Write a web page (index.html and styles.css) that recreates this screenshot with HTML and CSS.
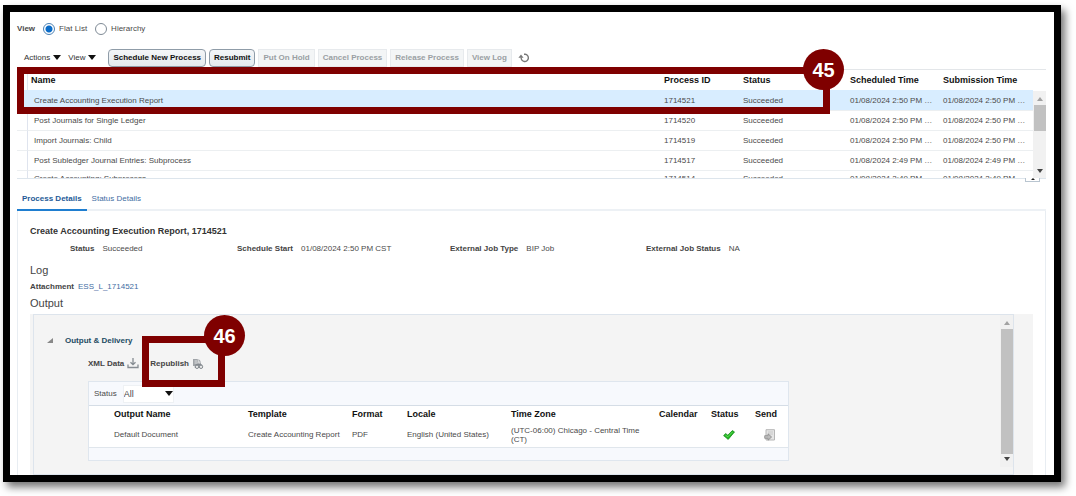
FILE: index.html
```html
<!DOCTYPE html>
<html lang="en">
<head>
<meta charset="utf-8">
<title>Scheduled Processes</title>
<link rel="stylesheet" href="styles.css">
</head>
<body>
<main class="frame">
  <fieldset class="view-mode">
    <legend class="view-legend">View</legend>
    <label class="radio"><input type="radio" name="view" checked>Flat List</label>
    <label class="radio"><input type="radio" name="view">Hierarchy</label>
  </fieldset>

  <div class="toolbar">
    <button class="menu-button menu-actions" type="button">Actions <span class="caret"></span></button>
    <button class="menu-button menu-view" type="button">View <span class="caret"></span></button>
    <button class="button" type="button">Schedule New Process</button>
    <button class="button" type="button">Resubmit</button>
    <button class="button" type="button" disabled>Put On Hold</button>
    <button class="button" type="button" disabled>Cancel Process</button>
    <button class="button" type="button" disabled>Release Process</button>
    <button class="button" type="button" disabled>View Log</button>
    <button class="icon-button" type="button" aria-label="Refresh">
      <svg width="12" height="10" viewBox="0 0 12 10"><path d="M6 1.300H7.200A3.600 3.600 0 1 1 3.200 4.400" fill="none" stroke="#777" stroke-width="1.400"/><path d="M.4 4.800 3 1.600 5.600 4.800Z" fill="#777"/></svg>
    </button>
  </div>

  <section class="process-area">
    <div class="process-list">
      <table class="processes">
        <colgroup><col class="c-gutter"><col><col class="c-id"><col class="c-status"><col class="c-time"><col class="c-sub"></colgroup>
        <thead>
          <tr><th></th><th class="name-head">Name</th><th>Process ID</th><th>Status</th><th>Scheduled Time</th><th>Submission Time</th></tr>
        </thead>
        <tbody>
          <tr class="selected"><td></td><td>Create Accounting Execution Report</td><td>1714521</td><td>Succeeded</td><td>01/08/2024 2:50 PM …</td><td>01/08/2024 2:50 PM …</td></tr>
          <tr><td></td><td>Post Journals for Single Ledger</td><td>1714520</td><td>Succeeded</td><td>01/08/2024 2:50 PM …</td><td>01/08/2024 2:50 PM …</td></tr>
          <tr><td></td><td>Import Journals: Child</td><td>1714519</td><td>Succeeded</td><td>01/08/2024 2:50 PM …</td><td>01/08/2024 2:50 PM …</td></tr>
          <tr><td></td><td>Post Subledger Journal Entries: Subprocess</td><td>1714517</td><td>Succeeded</td><td>01/08/2024 2:49 PM …</td><td>01/08/2024 2:49 PM …</td></tr>
          <tr><td></td><td>Create Accounting: Subprocess</td><td>1714514</td><td>Succeeded</td><td>01/08/2024 2:49 PM …</td><td>01/08/2024 2:49 PM …</td></tr>
        </tbody>
      </table>
      <div class="scrollbar list-scroll"><span class="arrow-up"></span><span class="thumb"></span><span class="arrow-down"></span></div>
    </div>
    <span class="splitter"><span class="splitter-arrow"></span></span>
    <div class="callout callout-row"><span class="callout-number">45</span></div>
  </section>

  <nav class="tabs">
    <a class="tab active" href="#process">Process Details</a>
    <a class="tab" href="#status">Status Details</a>
  </nav>

  <section class="panel" id="process">
    <h1 class="title">Create Accounting Execution Report, 1714521</h1>
    <dl class="fields">
      <div class="field"><dt>Status</dt><dd>Succeeded</dd></div>
      <div class="field"><dt>Schedule Start</dt><dd>01/08/2024 2:50 PM CST</dd></div>
      <div class="field"><dt>External Job Type</dt><dd>BIP Job</dd></div>
      <div class="field"><dt>External Job Status</dt><dd>NA</dd></div>
    </dl>
    <h2 class="subtitle">Log</h2>
    <p class="attachment"><b>Attachment</b><a href="#log">ESS_L_1714521</a></p>
    <h2 class="subtitle output-title">Output</h2>

    <div class="output-well">
      <div class="output">
        <div class="output-body">
          <h3 class="delivery"><span class="disclosure"></span>Output &amp; Delivery</h3>
          <div class="actions">
            <button class="action" type="button">XML Data
              <svg width="12" height="12" viewBox="0 0 12 12" fill="none" stroke="#868c92"><path d="M6 0V6.500M3.500 4.200 6 6.700 8.500 4.200" stroke-width="1.300"/><path d="M1 6.500V9.500H11V6.500" stroke-width="1.300"/></svg>
            </button>
            <button class="action" type="button">Republish
              <svg width="12" height="12" viewBox="0 0 12 12"><path d="M1 1H6.500L9 3.500V8H1Z" fill="#a0a4a8"/><path d="M6.200 1V4H9M2.500 3H5M2.500 5H8" fill="none" stroke="#f0f0f0" stroke-width=".8"/><path d="M3.500 6.500 6 5.500 10 6.500 11 9.500H2.500Z" fill="#858b90"/><circle cx="5" cy="8.800" r="1.700" fill="#e8e8e8" stroke="#858b90"/><circle cx="9" cy="8.800" r="1.700" fill="#e8e8e8" stroke="#858b90"/></svg>
            </button>
            <div class="callout callout-republish"><span class="callout-number">46</span></div>
          </div>
          <div class="documents">
            <div class="filter"><label for="status-filter">Status</label>
              <span class="select-wrap"><select id="status-filter"><option>All</option></select><span class="caret"></span></span>
            </div>
            <table class="docs">
              <colgroup><col class="d-pad"><col class="d-name"><col class="d-template"><col class="d-format"><col class="d-locale"><col class="d-zone"><col class="d-calendar"><col class="d-status"><col class="d-send"></colgroup>
              <thead><tr><th></th><th>Output Name</th><th>Template</th><th>Format</th><th>Locale</th><th>Time Zone</th><th>Calendar</th><th>Status</th><th>Send</th></tr></thead>
              <tbody><tr>
                <td></td><td>Default Document</td><td>Create Accounting Report</td><td>PDF</td><td>English (United States)</td><td>(UTC-06:00) Chicago - Central Time (CT)</td><td></td>
                <td class="icon-cell"><svg role="img" aria-label="Succeeded" width="12" height="10" viewBox="0 0 12 10"><path d="M.6 5.600 2.700 3.600 4.800 5.200 9.300.6 11.500 1.900 5.200 9.400Z" fill="#22b824" stroke="#1a8a1c" stroke-width=".8" stroke-linejoin="round"/><path d="M2.400 5.100 4.900 6.800 9.600 1.900" fill="none" stroke="#6fe05f" stroke-width=".8"/></svg></td>
                <td class="icon-cell"><svg role="img" aria-label="Send" width="12" height="12" viewBox="0 0 12 12"><path d="M2 .7H10.500V11H2Z" fill="#e5e5e5" stroke="#b6b6b6"/><path d="M4 3H9M4 5H9" stroke="#c8c8c8"/><path d="M.7 6.700H4V4.800L7.600 8 4 11.200V9.300H.7Z" fill="#bbb" stroke="#8c8c8c" stroke-width=".8"/></svg></td>
              </tr></tbody>
            </table>
            <div class="docs-footer"></div>
          </div>
        </div>
        <div class="scrollbar output-scroll"><span class="arrow-up"></span><span class="thumb"></span><span class="arrow-down"></span></div>
      </div>
    </div>
  </section>
</main>
</body>
</html>
```
FILE: styles.css
```css
* { box-sizing: border-box; }

body {
  margin: 0;
  background: #fff;
  font: 8px/10px "Liberation Sans", Arial, sans-serif;
  color: #4a4a4a;
}

h1, h2, h3, p, dl, dd { margin: 0; }
a { color: #3f6ea3; text-decoration: none; }
button, select { font: inherit; color: inherit; }
svg { display: block; }

.frame {
  margin: 5px 15px 14px 3px;
  padding: 11px 8px 0 7px;
  border: 7px solid #000;
  background: #fff;
  box-shadow: 4px 5px 8px rgba(0, 0, 0, .55);
}

/* view switch */
.view-mode {
  display: flex;
  align-items: center;
  gap: 8px;
  height: 12px;
  margin: 0 0 13px;
  padding: 0;
  border: 0;
}
.view-legend {
  float: left;
  padding: 0;
  font-weight: bold;
}
.radio { display: flex; align-items: center; gap: 4px; }
.radio input {
  appearance: none;
  width: 12px;
  height: 12px;
  margin: 0;
  border: 1px solid #7f8b96;
  border-radius: 50%;
  background: #fff;
}
.radio input:checked {
  border-color: #4d82b4;
  background: radial-gradient(circle, #0a6cc8 0 3px, #fff 4px);
}

/* toolbar */
.toolbar {
  display: flex;
  align-items: center;
  gap: 3px;
  height: 19px;
  margin-bottom: 2px;
  padding-left: 7px;
}
.menu-button {
  display: flex;
  align-items: center;
  gap: 3px;
  padding: 0;
  border: 0;
  background: none;
  color: #333;
}
.menu-actions { margin-right: 4px; }
.menu-view { margin-right: 9px; }
.caret {
  border: 4px solid transparent;
  border-top: 5px solid #111;
  border-bottom: 0;
}
.button {
  height: 18px;
  padding: 0 4px;
  border: 1px solid #8f9ca8;
  border-radius: 4px;
  background: linear-gradient(#f4f6f8, #e4e9ed);
  color: #111;
  font-weight: bold;
  white-space: nowrap;
}
.button:disabled {
  border-color: #e7eaed;
  border-radius: 0;
  background: #f3f5f6;
  color: #9a9fa3;
}
.icon-button { margin-left: 3px; padding: 0; border: 0; background: none; }

/* process list */
.process-area { position: relative; }
.process-list {
  display: flex;
  height: 110px;
  overflow: hidden;
  border-top: 1px solid #e3e6e9;
  border-bottom: 1px solid #dde5ec;
}
.processes {
  flex: 1;
  table-layout: fixed;
  border-collapse: separate;
  border-spacing: 0;
  white-space: nowrap;
}
.c-gutter { width: 10px; }
.c-id { width: 79px; }
.c-status { width: 107px; }
.c-time { width: 93px; }
.c-sub { width: 90px; }
.processes th {
  height: 20px;
  padding: 0;
  color: #111;
  font-size: 9px;
  text-align: left;
}
.processes .name-head { padding-left: 3px; border-left: 1px solid #e1e6ef; }
.processes td {
  height: 20px;
  padding: 0;
  border-top: 1px solid #eceff1;
}
.processes tr:last-child td { height: 16px; }
.processes td:nth-child(2) { padding-left: 6px; border-left: 1px solid #dfe4ee; }
.processes .selected td { border-color: #d8edff; background: #d8edff; }

.scrollbar {
  display: flex;
  flex-direction: column;
  align-items: center;
  justify-content: space-between;
  flex: none;
  width: 13px;
  background: #f1f1f1;
}
.scrollbar .thumb { width: 12px; background: #c1c1c1; }
.arrow-up { border: 3px solid transparent; border-bottom: 4px solid #a2a2a2; border-top: 0; }
.arrow-down { border: 3px solid transparent; border-top: 4px solid #444; border-bottom: 0; }
.list-scroll { margin-top: 21px; padding: 6px 0 5px; }
.list-scroll .thumb { height: 26px; margin: 4px 0 auto; }

.splitter {
  position: absolute;
  right: 6px;
  bottom: -3px;
  width: 15px;
  height: 4px;
  border: 1px solid #b9c5d0;
  border-top: 0;
  background: #fff;
}
.splitter-arrow {
  display: block;
  width: 0;
  margin: 0 auto;
  border: 2px solid transparent;
  border-top: 0;
  border-bottom: 2px solid #222;
}

/* numbered markers */
.callout { position: absolute; z-index: 1; border: 7px solid #7f0000; }
.callout-number {
  position: absolute;
  display: grid;
  place-items: center;
  width: 41px;
  height: 41px;
  border-radius: 50%;
  background: #7f0000;
  color: #fff;
  font: bold 20px/20px "Liberation Sans", Arial, sans-serif;
}
.callout-row { top: -2px; left: 0; right: 216px; height: 47px; }
.callout-row .callout-number { top: -25px; right: -21px; }
.callout-republish { top: -21px; left: 54px; width: 83px; height: 51px; }
.callout-republish .callout-number { top: -28px; right: -27px; }

/* tabs */
.tabs {
  display: flex;
  height: 24px;
  margin-top: 8px;
  border-bottom: 2px solid #edf1f5;
}
.tab { height: 24px; padding: 7px 5px 0; }
.tab.active { border-bottom: 2px solid #1f7ed0; color: #245a97; font-weight: bold; }

/* details */
.panel {
  padding: 13px 12px 0;
  border: 1px solid #e8edf2;
  border-top: 0;
  border-bottom: 0;
}
.title { color: #333; font-size: 9px; line-height: 14px; }
.fields {
  display: grid;
  grid-template-columns: 167fr 213fr 196fr 387fr;
  margin-top: 6px;
  padding-left: 40px;
}
.field { display: flex; gap: 8px; }
.field dt, .attachment b { color: #444; font-weight: bold; }
.subtitle {
  margin-top: 9px;
  color: #444;
  font-size: 11px;
  font-weight: normal;
  line-height: 14px;
}
.attachment { display: flex; gap: 4px; margin-top: 5px; }
.output-title { margin-top: 4px; }

.output-well { margin-top: 4px; padding: 0 19px 0 3px; background: #f4f4f4; }
.output {
  display: flex;
  align-items: flex-start;
  border: 1px solid #dde4ec;
}
.output-body { flex: 1; padding: 20px 0 13px 54px; }
.delivery {
  position: relative;
  margin-left: -23px;
  color: #1d4b63;
  font-size: 8px;
  line-height: 12px;
}
.disclosure {
  position: absolute;
  top: 3px;
  left: -18px;
  border-bottom: 5px solid #888;
  border-left: 6px solid transparent;
}
.actions { position: relative; display: flex; gap: 11px; height: 14px; margin-top: 10px; }
.action {
  display: flex;
  align-items: center;
  gap: 3px;
  padding: 0;
  border: 0;
  background: none;
  color: #444;
  font-weight: bold;
}
.documents {
  max-width: 701px;
  margin-top: 10px;
  border: 1px solid #dfe6ee;
  background: #f7f9fd;
}
.filter {
  display: flex;
  align-items: center;
  gap: 6px;
  height: 24px;
  padding-left: 5px;
  border-bottom: 1px solid #d5dde6;
}
.select-wrap { position: relative; display: flex; align-items: center; }
.select-wrap .caret { position: absolute; right: 1px; pointer-events: none; }
.filter select {
  appearance: none;
  width: 51px;
  height: 18px;
  padding: 0;
  border: 1px solid #eef1f4;
  border-radius: 0;
  background: #fff;
  font-size: 9px;
}
.docs {
  width: 100%;
  table-layout: fixed;
  border-spacing: 0;
  border-bottom: 1px solid #e0e6ec;
  background: #fff;
}
.d-pad { width: 25px; }
.d-name { width: 134px; }
.d-template { width: 104px; }
.d-format { width: 55px; }
.d-locale { width: 104px; }
.d-zone { width: 148px; }
.d-calendar { width: 52px; }
.d-status { width: 44px; }
.docs th { height: 16px; padding: 0; color: #111; font-size: 9px; text-align: left; }
.docs td { height: 25px; padding: 0; line-height: 9px; }
.docs td:nth-child(6) { padding-right: 16px; }
.docs .icon-cell { padding-left: 12px; }
.docs td:last-child { padding-left: 9px; }
.docs-footer { height: 12px; }

.output-scroll { height: 152px; padding: 6px 0; }
.output-scroll .thumb { height: 125px; }
```
